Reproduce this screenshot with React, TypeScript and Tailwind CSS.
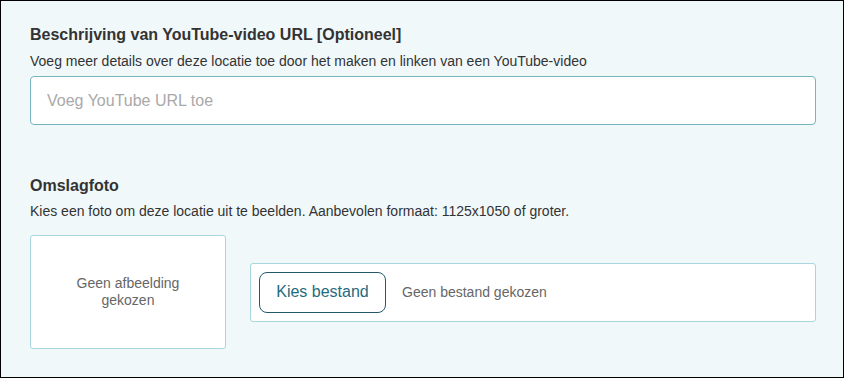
import React from "react";

export default function App() {
	return (
		<div
			className="w-[844px] h-[378px] border border-black bg-[#f1f8fa] text-[#333] overflow-hidden"
			style={{ fontFamily: '"Liberation Sans", Arial, sans-serif' }}
		>
			<div className="pl-[29px] pr-[27px] pt-[24px]">
				{/* YouTube URL */}
				<h2 className="text-[16px] font-bold leading-[20px] text-[#333]">
					Beschrijving van YouTube-video URL [Optioneel]
				</h2>
				<p className="mt-[8px] text-[14px] leading-[16px] text-[#333]">
					Voeg meer details over deze locatie toe door het maken en linken van een YouTube-video
				</p>
				<input
					type="text"
					placeholder="Voeg YouTube URL toe"
					className="mt-[7px] block w-full h-[49px] rounded-[4px] border border-[#74b6bf] bg-white px-[16px] text-[16px] text-[#333] placeholder:text-[#a9a9a9] outline-none"
				/>

				{/* Omslagfoto */}
				<h2 className="mt-[51px] text-[16px] font-bold leading-[20px] text-[#333]">Omslagfoto</h2>
				<p className="mt-[7px] text-[14px] leading-[16px] text-[#333]">
					Kies een foto om deze locatie uit te beelden. Aanbevolen formaat: 1125x1050 of groter.
				</p>
				<div className="mt-[16px] flex items-center gap-[24px]">
					<div className="w-[196px] h-[114px] shrink-0 rounded-[3px] border border-[#a9d5dd] bg-white flex items-center justify-center text-center text-[14px] leading-[17px] text-[#666]">
						<span>
							Geen afbeelding
							<br />
							gekozen
						</span>
					</div>
					<div className="flex-1 h-[59px] rounded-[3px] border border-[#a9d5dd] bg-white flex items-center px-[8px] gap-[16px]">
						<button className="w-[127px] h-[41px] rounded-[8px] border border-[#24596b] bg-white text-[16px] text-[#1f6b7e]">
							Kies bestand
						</button>
						<span className="text-[14px] text-[#666]">Geen bestand gekozen</span>
					</div>
				</div>
			</div>
		</div>
	);
}
